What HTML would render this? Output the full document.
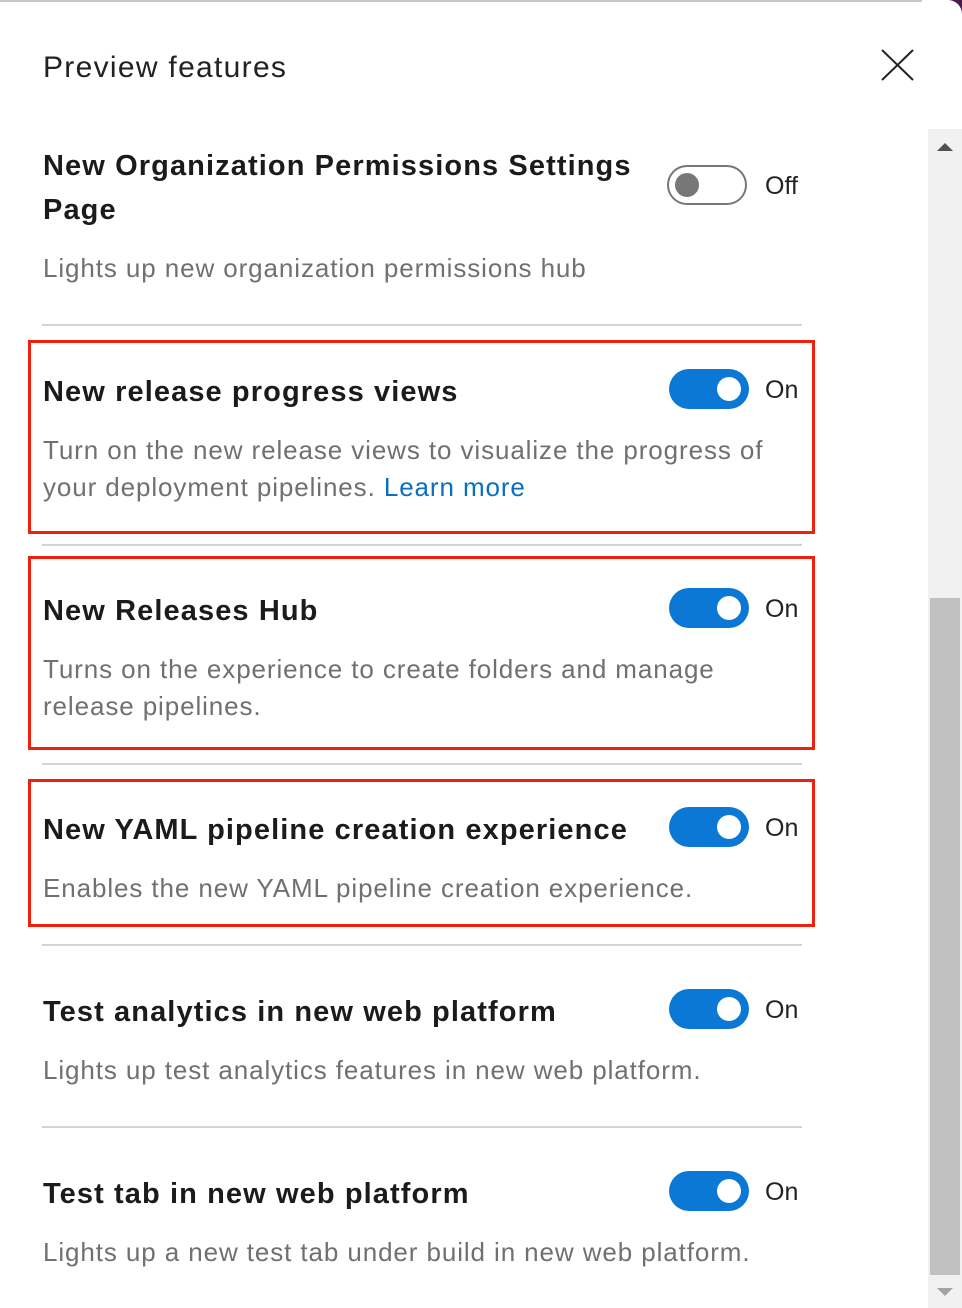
<!DOCTYPE html>
<html><head><meta charset="utf-8"><style>
*{margin:0;padding:0;box-sizing:border-box}
body{width:962px;height:1308px;background:#fff;position:relative;overflow:hidden;font-family:"Liberation Sans",sans-serif}
.a{position:absolute;white-space:nowrap}
.h{font-weight:bold;font-size:29px;letter-spacing:1.1px;color:#1b1b1b;left:43px;margin-top:2px}
.d{font-size:26px;letter-spacing:0.9px;color:#707070;left:43px;margin-top:-1px}
.sep{position:absolute;left:42px;width:760px;height:2px;background:#d4d4d4}
.red{position:absolute;left:28px;width:787px;border:3px solid #f0200f}
.tg{position:absolute;left:669px;width:80px;height:40px;border-radius:20px;background:#0a78d4}
.tg::after{content:"";position:absolute;right:8px;top:8px;width:24px;height:24px;border-radius:50%;background:#fff}
.on{position:absolute;left:765px;font-size:25px;color:#222}
</style></head><body>
<div style="position:absolute;left:0;top:0;width:962px;height:2px;background:#c8c8c8"></div>
<div style="position:absolute;right:0;top:0;width:30px;height:14px;background:#4a1a4a"></div>
<div style="position:absolute;right:0;top:0;width:40px;height:40px;background:#fff;border-top-right-radius:14px"></div>
<div class="a" style="left:43px;top:51px;font-size:30px;letter-spacing:1.3px;color:#222">Preview features</div>
<svg class="a" style="left:880px;top:48px" width="36" height="34"><path d="M2 2L33 32M33 2L2 32" stroke="#222" stroke-width="2"/></svg>
<div style="position:absolute;left:928px;top:129px;width:34px;height:1179px;background:#f1f1f1"></div>
<div style="position:absolute;left:930px;top:598px;width:30px;height:677px;background:#c1c1c1"></div>
<svg class="a" style="left:937px;top:142px" width="16" height="10"><path d="M0 9L8 1L16 9Z" fill="#505050"/></svg>
<svg class="a" style="left:937px;top:1287px" width="16" height="10"><path d="M0 1L8 9L16 1Z" fill="#a3a3a3"/></svg>

<div class="a h" style="top:148px">New Organization Permissions Settings</div>
<div class="a h" style="top:192px">Page</div>
<div style="position:absolute;left:667px;top:165px;width:80px;height:40px;border:2px solid #777;border-radius:20px"></div>
<div style="position:absolute;left:675px;top:173px;width:24px;height:24px;border-radius:50%;background:#777"></div>
<div class="on" style="top:172px">Off</div>
<div class="a d" style="top:254px">Lights up new organization permissions hub</div>
<div class="sep" style="top:324px"></div>

<div class="red" style="top:340px;height:194px"></div>
<div class="a h" style="top:374px">New release progress views</div>
<div class="tg" style="top:369px"></div><div class="on" style="top:376px">On</div>
<div class="a d" style="top:436px">Turn on the new release views to visualize the progress of</div>
<div class="a d" style="top:473px">your deployment pipelines. <span style="color:#0a6fc2">Learn more</span></div>
<div class="sep" style="top:544px"></div>

<div class="red" style="top:556px;height:194px"></div>
<div class="a h" style="top:593px">New Releases Hub</div>
<div class="tg" style="top:588px"></div><div class="on" style="top:595px">On</div>
<div class="a d" style="top:655px">Turns on the experience to create folders and manage</div>
<div class="a d" style="top:692px">release pipelines.</div>
<div class="sep" style="top:763px"></div>

<div class="red" style="top:779px;height:148px"></div>
<div class="a h" style="top:812px">New YAML pipeline creation experience</div>
<div class="tg" style="top:807px"></div><div class="on" style="top:814px">On</div>
<div class="a d" style="top:874px">Enables the new YAML pipeline creation experience.</div>
<div class="sep" style="top:944px"></div>

<div class="a h" style="top:994px">Test analytics in new web platform</div>
<div class="tg" style="top:989px"></div><div class="on" style="top:996px">On</div>
<div class="a d" style="top:1056px">Lights up test analytics features in new web platform.</div>
<div class="sep" style="top:1126px"></div>

<div class="a h" style="top:1176px">Test tab in new web platform</div>
<div class="tg" style="top:1171px"></div><div class="on" style="top:1178px">On</div>
<div class="a d" style="top:1238px">Lights up a new test tab under build in new web platform.</div>
</body></html>
